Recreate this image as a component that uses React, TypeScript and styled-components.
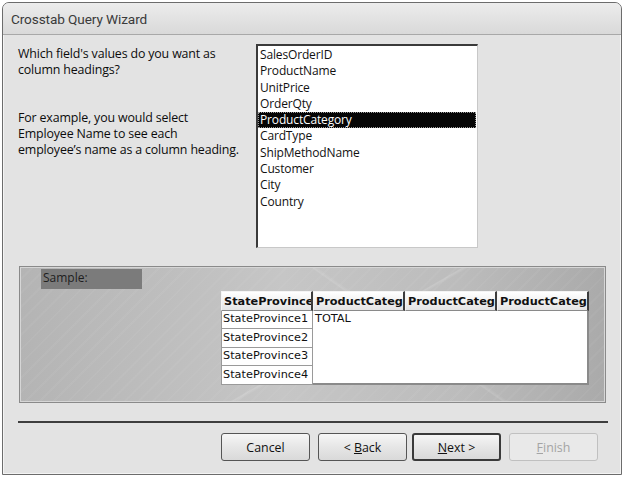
import React from 'react';
import styled, {createGlobalStyle} from 'styled-components';

const GlobalStyle = createGlobalStyle`
  body {
    margin: 0;
    background: #ffffff;
    font-family: "Open Sans", "Noto Sans", sans-serif;
  }
`

const Window = styled.div`
  box-sizing: border-box;
  margin: 2px 0 0 2px;
  width: 620px;
  height: 473px;
  border: 1px solid #6c6c6c;
  border-radius: 7px 7px 0 0;
  background: #e3e3e3;
  box-shadow: inset 0 0 0 1px #f4f4f4;
  display: flex;
  flex-direction: column;
  overflow: hidden;
`

const TitleBar = styled.div`
  height: 31px;
  flex-shrink: 0;
  display: flex;
  align-items: center;
  padding-left: 8px;
  background: linear-gradient(#ececec, #d9d9d9);
  border-bottom: 1px solid #a8a8a8;
  font-family: Roboto, "Open Sans", sans-serif;
  font-size: 13.6px;
  letter-spacing: -0.1px;
  color: #3a3a3a;
`

const Body = styled.div`
  flex: 1;
  display: flex;
  flex-direction: column;
  padding: 9px 0 0 15px;
`

const Top = styled.div`
  display: flex;
  height: 204px;
`

const Prompt = styled.div`
  width: 238px;
  font-size: 12.4px;
  line-height: 16px;
  color: #0c0c0c;
  letter-spacing: -0.15px;
  padding-top: 2px;
`

const Para = styled.p`
  margin: 0 0 32px 0;
`

const ListBox = styled.div`
  box-sizing: border-box;
  width: 222px;
  height: 204px;
  background: #fff;
  border-left: 2px solid #3a3a3a;
  border-top: 2px solid #3a3a3a;
  border-right: 1px solid #c8c8c8;
  border-bottom: 1px solid #c8c8c8;
  padding-top: 1px;
`

const ListItem = styled.div<{ $selected?: boolean }>`
  box-sizing: border-box;
  height: 16.3px;
  line-height: 16px;
  padding-left: 2px;
  font-size: 12px;
  letter-spacing: -0.15px;
  color: ${props => props.$selected ? '#fff' : '#111'};
  background: ${props => props.$selected ? '#050505' : 'transparent'};
  outline: ${props => props.$selected ? '1px dotted #9a9a9a' : 'none'};
  outline-offset: -1px;
  margin-right: 1px;
`

const SamplePanel = styled.div`
  box-sizing: border-box;
  margin: 18px 0 0 1px;
  width: 587px;
  height: 137px;
  border: 1px solid #8a8a8a;
  box-shadow: inset 0 0 0 1px #d6d6d6;
  padding: 2px 0 0 21px;
  background:
    linear-gradient(150deg, transparent 54%, rgba(255, 255, 255, 0.16) 54.3%, transparent 55%),
    linear-gradient(35deg, transparent 62%, rgba(255, 255, 255, 0.12) 62.3%, transparent 63%),
    repeating-linear-gradient(135deg, transparent 0 8px, rgba(255, 255, 255, 0.04) 8px 10px),
    linear-gradient(90deg, #b4b4b4 0%, #c6c6c6 45%, #bcbcbc 75%, #aaaaaa 100%);
`

const SampleLabel = styled.div`
  width: 101px;
  height: 20px;
  background: #7b7b7b;
  font-size: 12px;
  line-height: 18px;
  padding-left: 2px;
  box-sizing: border-box;
  color: #1e1e1e;
`

const Grid = styled.div`
  margin: 2px 0 0 180px;
  width: 368px;
  font-family: "DejaVu Sans", "Liberation Sans", sans-serif;
  font-size: 11.3px;
`

const HeaderRow = styled.div`
  display: flex;
  height: 20px;
`

const HeaderCell = styled.div`
  box-sizing: border-box;
  width: 92px;
  height: 20px;
  line-height: 19px;
  padding-left: 2px;
  font-weight: bold;
  white-space: nowrap;
  overflow: hidden;
  color: #111;
  background: linear-gradient(#ffffff, #e4e4e4);
  border-top: 1px solid #f4f4f4;
  border-left: 1px solid #f4f4f4;
  border-right: 2px solid #3c3c3c;
  border-bottom: 1px solid #8a8a8a;
`

const DataArea = styled.div`
  display: flex;
`

const RowHeads = styled.div`
  width: 92px;
  display: flex;
  flex-direction: column;
`

const RowHead = styled.div<{ $h: number }>`
  box-sizing: border-box;
  height: ${props => props.$h}px;
  line-height: ${props => props.$h - 2}px;
  padding-left: 1px;
  background: #fff;
  border: 1px solid #9a9a9a;
  border-top: none;
  white-space: nowrap;
  overflow: hidden;
  color: #111;
`

const Values = styled.div`
  box-sizing: border-box;
  width: 276px;
  height: 74px;
  background: #fff;
  border-right: 2px solid #8a8a8a;
  border-bottom: 2px solid #8a8a8a;
  padding: 1px 0 0 2px;
  color: #111;
`

const Divider = styled.div`
  margin: 18px 0 0 0;
  width: 590px;
  height: 2px;
  background: #3e3e3e;
`

const Buttons = styled.div`
  display: flex;
  gap: 8px;
  margin: 10px 0 0 203px;
`

const Pair = styled.div`
  display: flex;
  gap: 5px;
`

const Button = styled.button<{ $default?: boolean }>`
  box-sizing: border-box;
  width: 89px;
  height: 28px;
  font-family: "Open Sans", "Noto Sans", sans-serif;
  font-size: 12.4px;
  color: #111;
  border-radius: 3px;
  border: ${props => props.$default ? '2px solid #3a3a3a' : '1px solid #555'};
  background: linear-gradient(#f6f6f6, #e6e6e6 50%, #d9d9d9);
  padding: 0;

  &:disabled {
    color: #a4a4a4;
    border: 1px solid #c0c0c0;
    background: #e9e9e9;
  }
`

const fields = [
  'SalesOrderID',
  'ProductName',
  'UnitPrice',
  'OrderQty',
  'ProductCategory',
  'CardType',
  'ShipMethodName',
  'Customer',
  'City',
  'Country',
]

const rowHeights = [18, 19, 18, 19]

export default function App() {
  return (
    <>
      <GlobalStyle/>
      <Window>
        <TitleBar>Crosstab Query Wizard</TitleBar>
        <Body>
          <Top>
            <Prompt>
              <Para>Which field's values do you want as<br/>column headings?</Para>
              <Para>For example, you would select<br/>Employee Name to see each<br/>employee’s name as a column heading.</Para>
            </Prompt>
            <ListBox>
              {fields.map(f => (
                <ListItem key={f} $selected={f === 'ProductCategory'}>{f}</ListItem>
              ))}
            </ListBox>
          </Top>
          <SamplePanel>
            <SampleLabel>Sample:</SampleLabel>
            <Grid>
              <HeaderRow>
                <HeaderCell>StateProvince</HeaderCell>
                <HeaderCell>ProductCategory</HeaderCell>
                <HeaderCell>ProductCategory</HeaderCell>
                <HeaderCell>ProductCategory</HeaderCell>
              </HeaderRow>
              <DataArea>
                <RowHeads>
                  {rowHeights.map((h, i) => (
                    <RowHead key={i} $h={h}>StateProvince{i + 1}</RowHead>
                  ))}
                </RowHeads>
                <Values>TOTAL</Values>
              </DataArea>
            </Grid>
          </SamplePanel>
          <Divider/>
          <Buttons>
            <Button>Cancel</Button>
            <Pair>
              <Button>&lt; <u>B</u>ack</Button>
              <Button $default><u>N</u>ext &gt;</Button>
            </Pair>
            <Button disabled><u>F</u>inish</Button>
          </Buttons>
        </Body>
      </Window>
    </>
  );
}
